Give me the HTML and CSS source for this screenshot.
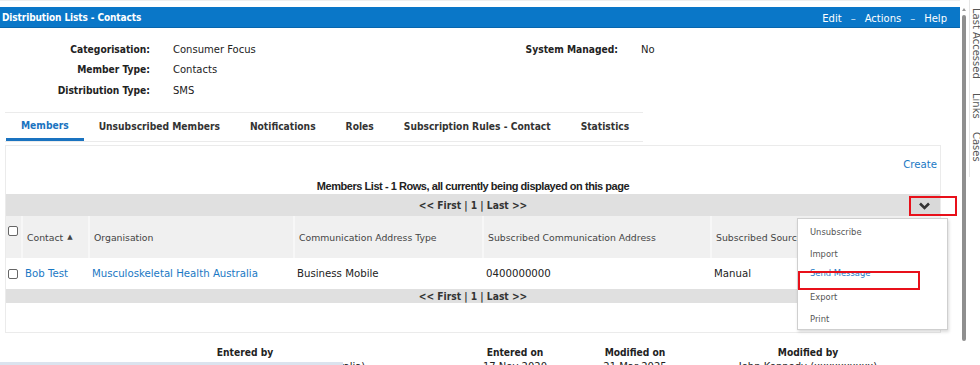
FILE: index.html
```html
<!DOCTYPE html>
<html lang="en">
<head>
    <meta charset="UTF-8">
    <title>Distribution Lists - Contacts</title>
    <link rel="stylesheet" href="styles.css">
</head>
<body>
    <div class="layout">
        <div class="main">
            <div class="topline"></div>
            <div class="titlebar">
                <span class="title">Distribution Lists - Contacts</span>
                <div class="title-menu">
                    <span>Edit</span>
                    <span class="dash">&ndash;</span>
                    <span>Actions</span>
                    <span class="dash">&ndash;</span>
                    <span>Help</span>
                </div>
            </div>

            <div class="fields">
                <div class="label">Categorisation:</div>
                <div class="value">Consumer Focus</div>
                <div class="label">System Managed:</div>
                <div class="value">No</div>
                <div class="label">Member Type:</div>
                <div class="value">Contacts</div>
                <div></div><div></div>
                <div class="label">Distribution Type:</div>
                <div class="value">SMS</div>
                <div></div><div></div>
            </div>

            <div class="tabs">
                <div class="tab active">Members</div>
                <div class="tab">Unsubscribed Members</div>
                <div class="tab">Notifications</div>
                <div class="tab">Roles</div>
                <div class="tab">Subscription Rules - Contact</div>
                <div class="tab">Statistics</div>
            </div>

            <div class="panel">
                <div class="create-row"><a class="link">Create</a></div>
                <div class="caption">Members List - 1 Rows, all currently being displayed on this page</div>
                <div class="pager">
                    <span>&lt;&lt; First | 1 | Last &gt;&gt;</span>
                    <div class="menu-btn">
                        <svg width="11" height="8" viewBox="0 0 11 8"><path d="M1 1.5 L5.5 6 L10 1.5" fill="none" stroke="#333" stroke-width="2.6"/></svg>
                    </div>
                    <div class="red-box btn-box"></div>
                </div>
                <div class="grid head">
                    <div class="cell chk top"><span class="box"></span></div>
                    <div class="cell">Contact <span class="sort">&#9650;</span></div>
                    <div class="cell">Organisation</div>
                    <div class="cell">Communication Address Type</div>
                    <div class="cell">Subscribed Communication Address</div>
                    <div class="cell">Subscribed Source</div>
                </div>
                <div class="grid row">
                    <div class="cell chk"><span class="box"></span></div>
                    <div class="cell"><a class="link">Bob Test</a></div>
                    <div class="cell"><a class="link">Musculoskeletal Health Australia</a></div>
                    <div class="cell">Business Mobile</div>
                    <div class="cell">0400000000</div>
                    <div class="cell">Manual</div>
                </div>
                <div class="pager small">&lt;&lt; First | 1 | Last &gt;&gt;</div>

                <div class="dropdown">
                    <div class="item">Unsubscribe</div>
                    <div class="item">Import</div>
                    <div class="item active">Send Message</div>
                    <div class="item">Export</div>
                    <div class="item">Print</div>
                    <div class="red-box item-box"></div>
                </div>
            </div>

            <div class="audit">
                <div class="audit-head">Entered by</div>
                <div class="audit-head">Entered on</div>
                <div class="audit-head">Modified on</div>
                <div class="audit-head">Modified by</div>
                <div>Jane Williams (Musculoskeletal Health Australia)</div>
                <div>17 Nov 2020</div>
                <div>21 Mar 2025</div>
                <div>John Kennedy (xxxxxxxxxx)</div>
            </div>
        </div>

        <div class="vscroll">
            <div class="arrow"></div>
            <div class="thumb"></div>
        </div>

        <div class="side">
            <div class="side-tab">Last Accessed</div>
            <div class="side-tab">Links</div>
            <div class="side-tab">Cases</div>
        </div>
    </div>
    <div class="hscroll"></div>
</body>
</html>
```

FILE: styles.css
```css
* {
    margin: 0;
    padding: 0;
    box-sizing: border-box;
}

body {
    font-family: "DejaVu Sans", Verdana, sans-serif;
    font-size: 10px;
    color: #222;
    background: white;
    width: 980px;
    height: 365px;
    overflow: hidden;
}

.layout {
    display: flex;
    height: 365px;
}

.main {
    width: 960px;
    flex: none;
}

.topline {
    height: 7px;
    border-top: 1px solid #eee;
}

.titlebar {
    height: 21px;
    background: #0a77c8;
    border-bottom: 1px solid #0866ad;
    color: white;
    display: flex;
    align-items: center;
    justify-content: space-between;
    padding: 0 13px 0 2px;
}

.title {
    font-family: "DejaVu Sans Condensed", "DejaVu Sans", sans-serif;
    font-weight: bold;
    font-size: 10px;
    letter-spacing: -0.1px;
}

.title-menu {
    display: flex;
    gap: 9px;
    font-size: 10px;
    padding-top: 2px;
}

.title-menu .dash {
    opacity: 0.8;
}

/* record fields */
.fields {
    display: grid;
    grid-template-columns: 150px 300px 168px 1fr;
    grid-auto-rows: 20.5px;
    align-items: center;
    padding-top: 11px;
    height: 84px;
}

.fields .label {
    font-family: "DejaVu Sans Condensed", "DejaVu Sans", sans-serif;
    font-weight: bold;
    text-align: right;
    font-size: 10.2px;
}

.fields .value {
    padding-left: 23px;
    font-size: 10px;
}

/* tabs */
.tabs {
    display: flex;
    margin-left: 5px;
    width: 638px;
    height: 30px;
    border-top: 1px solid #ebebeb;
    border-bottom: 1px solid #ebebeb;
}

.tab {
    padding: 0 15px 2px;
    font-family: "DejaVu Sans Condensed", "DejaVu Sans", sans-serif;
    font-weight: bold;
    font-size: 10.2px;
    color: #333;
    white-space: nowrap;
    display: flex;
    align-items: center;
}

.tab.active {
    color: #1a73c0;
    border-bottom: 3px solid #1a73c0;
    padding: 0 15px;
    margin-left: 1px;
}

/* members panel */
.panel {
    position: relative;
    margin: 3px 0 0 5px;
    width: 936px;
    height: 188px;
    border: 1px solid #ebebeb;
}

.link {
    color: #1a78c4;
    cursor: pointer;
}

.create-row {
    text-align: right;
    padding: 13px 3px 0 0;
    height: 30px;
    font-size: 10.2px;
}

.caption {
    font-family: "Liberation Sans", Arial, sans-serif;
    font-weight: bold;
    font-size: 11px;
    letter-spacing: -0.45px;
    text-align: center;
    height: 18px;
    padding-top: 3px;
    line-height: 14px;
}

.pager {
    position: relative;
    height: 22px;
    background: #e0e0e0;
    display: flex;
    align-items: center;
    justify-content: center;
    font-family: "DejaVu Sans Condensed", "DejaVu Sans", sans-serif;
    font-weight: bold;
    font-size: 10.2px;
    color: #333;
}

.pager.small {
    height: 14px;
}

.menu-btn {
    position: absolute;
    right: 0;
    top: 1px;
    width: 31px;
    height: 21px;
    background: #d9d9d9;
    display: flex;
    align-items: center;
    justify-content: center;
}

.red-box {
    position: absolute;
    border: 2px solid #e8101a;
}

.btn-box {
    left: 903px;
    top: 2px;
    width: 48px;
    height: 20px;
}

.grid {
    display: grid;
    grid-template-columns: 15px 67px 205px 189px 228px 1fr;
}

.head {
    height: 42px;
    background: #f0f0f0;
    color: #444;
    font-size: 9.3px;
}

.head .cell {
    border-left: 2px solid #f7f7f7;
}

.head .cell:first-child {
    border-left: none;
}

.row {
    height: 31px;
    background: white;
    font-size: 10.2px;
}

.cell {
    display: flex;
    align-items: center;
    padding-left: 4px;
    white-space: nowrap;
    overflow: hidden;
}

.cell.chk {
    padding-left: 2px;
}

.cell.top {
    align-items: flex-start;
    padding-top: 10px;
}

.box {
    width: 10px;
    height: 10px;
    border: 1px solid #666;
    border-radius: 2px;
    background: white;
}

.sort {
    font-size: 7px;
    margin-left: 4px;
}

/* actions dropdown */
.dropdown {
    position: absolute;
    left: 791px;
    top: 72px;
    width: 151px;
    height: 112px;
    background: white;
    border: 1px solid #cfcfcf;
    box-shadow: 1px 2px 3px rgba(0,0,0,0.15);
    padding-top: 2px;
}

.dropdown .item {
    height: 21.7px;
    padding-left: 12px;
    display: flex;
    align-items: center;
    font-family: "DejaVu Sans Condensed", "DejaVu Sans", sans-serif;
    font-size: 9.3px;
    color: #555;
}

.dropdown .item.active {
    color: #1a78c4;
    padding-bottom: 5px;
}

.item-box {
    left: 0;
    top: 52px;
    width: 122px;
    height: 19px;
}

/* audit footer */
.audit {
    display: grid;
    grid-template-columns: 460px 80px 160px 186px;
    margin: 14px 0 0 15px;
    text-align: center;
    row-gap: 3px;
    font-size: 10px;
    white-space: nowrap;
}

.audit-head {
    font-family: "DejaVu Sans Condensed", "DejaVu Sans", sans-serif;
    font-weight: bold;
    font-size: 10.2px;
}

/* right edge */
.vscroll {
    width: 9px;
    flex: none;
    position: relative;
}

.arrow {
    position: absolute;
    left: 2px;
    top: 8px;
    border-left: 2.5px solid transparent;
    border-right: 2.5px solid transparent;
    border-bottom: 3px solid #999;
}

.thumb {
    position: absolute;
    left: 2px;
    top: 15px;
    width: 4px;
    height: 326px;
    background: #8f8f8f;
    border-radius: 2px;
}

.side {
    width: 11px;
    flex: none;
    height: 177px;
    border-left: 1px solid #e6e6e6;
    overflow: hidden;
    padding-top: 8px;
    color: #555;
    font-size: 10px;
}

.side-tab {
    writing-mode: vertical-rl;
    margin-left: 1px;
    margin-bottom: 14px;
    white-space: nowrap;
}

.hscroll {
    position: fixed;
    left: 0;
    bottom: 0;
    width: 343px;
    height: 3px;
    background: #dbe3ee;
}
```
